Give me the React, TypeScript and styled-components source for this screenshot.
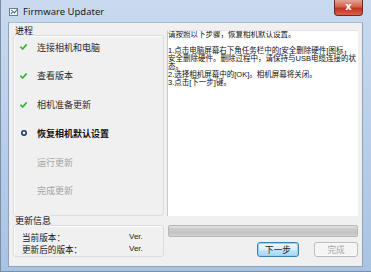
import React from 'react'
import styled, { createGlobalStyle } from 'styled-components'

type StepState = 'done' | 'current' | 'todo'

interface IStep {
  label: string
  state: StepState
}

const steps: IStep[] = [
  { label: '连接相机和电脑', state: 'done' },
  { label: '查看版本', state: 'done' },
  { label: '相机准备更新', state: 'done' },
  { label: '恢复相机默认设置', state: 'current' },
  { label: '运行更新', state: 'todo' },
  { label: '完成更新', state: 'todo' },
]

// the message box keeps its own line breaks, as in the dialog
const messageLines = [
  '1.点击电脑屏幕右下角任务栏中的[安全删除硬件]图标，',
  '安全删除硬件。删除过程中，请保持与USB电缆连接的状',
  '态。',
  '2.选择相机屏幕中的[OK]。相机屏幕将关闭。',
  '3.点击[下一步]键。',
]

const cjk = `"Noto Sans CJK SC", "Noto Sans", sans-serif`

const GlobalStyle = createGlobalStyle`
  html, body {
    margin: 0;
    padding: 0;
    background: #ffffff;
  }
  body {
    font-family: ${cjk};
  }
`

const AppIcon: React.FC = () => (
  <svg width="10" height="10" viewBox="0 0 10 10">
    <rect x="0.5" y="1.5" width="8" height="7" fill="#f4f6f8" stroke="#6d7a88" />
    <path d="M2 7 L4 4.5 L5.5 6 L8 2.5" stroke="#3c6fa8" strokeWidth="1.1" fill="none" />
    <rect x="2" y="3" width="2" height="1" fill="#8a96a3" />
  </svg>
)

const Check: React.FC = () => (
  <svg width="7" height="6" viewBox="0 0 7 6">
    <path d="M0.8 3.2 L2.7 5 L6.3 0.9" stroke="#2fb52f" strokeWidth="1.6" fill="none" strokeLinecap="round" />
  </svg>
)

const CurrentDot: React.FC = () => (
  <svg width="6" height="6" viewBox="0 0 6 6">
    <circle cx="3" cy="3" r="2.2" fill="#ffffff" stroke="#1a2e6e" strokeWidth="1.5" />
  </svg>
)

const App: React.FC = () => {
  return (
    <>
      <GlobalStyle />
      <Window>
        <TitleBar>
          <AppIcon />
          <Title>Firmware Updater</Title>
          <CloseButton>
            <span>x</span>
          </CloseButton>
        </TitleBar>
        <Client>
          <Layout>
            <GroupBox>
              <GroupLabel><span>进程</span></GroupLabel>
              <StepBox>
                {steps.map((s) => (
                  <StepRow key={s.label} $state={s.state}>
                    <StepIcon>
                      {s.state === 'done' && <Check />}
                      {s.state === 'current' && <CurrentDot />}
                    </StepIcon>
                    {s.label}
                  </StepRow>
                ))}
              </StepBox>
            </GroupBox>
            <MessageBox>
              <p>请按照以下步骤，恢复相机默认设置。</p>
              <p>&nbsp;</p>
              {messageLines.map((line) => (
                <p key={line}>{line}</p>
              ))}
            </MessageBox>
            <GroupBox>
              <GroupLabel><span>更新信息</span></GroupLabel>
              <InfoBox>
                <InfoRow>
                  <span>当前版本：</span>
                  <Ver>Ver.</Ver>
                </InfoRow>
                <InfoRow>
                  <span>更新后的版本：</span>
                  <Ver>Ver.</Ver>
                </InfoRow>
              </InfoBox>
            </GroupBox>
            <ActionArea>
              <Progress />
              <Buttons>
                <Button $primary>下一步</Button>
                <Button disabled>完成</Button>
              </Buttons>
            </ActionArea>
          </Layout>
        </Client>
      </Window>
    </>
  )
}

export default App

const Window = styled.div`
  width: 371px;
  height: 272px;
  box-sizing: border-box;
  display: flex;
  flex-direction: column;
  padding: 0 8px 4px 7px;
  background: linear-gradient(180deg, #c9daee 0%, #bcd1ea 40%, #a9c3e3 100%);
  border-left: 1px solid #7b8ea6;
  border-bottom: 1px solid #7b8ea6;
`

const TitleBar = styled.div`
  height: 22px;
  flex-shrink: 0;
  display: flex;
  align-items: center;
  gap: 4px;
  padding: 1px 0 0 1px;
  box-sizing: border-box;
  position: relative;
`

const Title = styled.span`
  font-family: "Noto Sans", "Open Sans", sans-serif;
  font-size: 9.5px;
  color: #1b1b1b;
`

const CloseButton = styled.div`
  position: absolute;
  right: 0;
  top: 0;
  width: 29px;
  height: 16px;
  box-sizing: border-box;
  border: 1px solid #6e2a22;
  border-top: none;
  border-radius: 0 0 4px 4px;
  background: linear-gradient(180deg, #e4a393 0%, #d4604a 45%, #c0321e 55%, #d8634a 100%);
  display: flex;
  align-items: center;
  justify-content: center;
  span {
    font-family: "DejaVu Sans", sans-serif;
    font-weight: 700;
    font-size: 10px;
    line-height: 1;
    color: #ffffff;
    margin-top: -2px;
  }
`

const Client = styled.div`
  flex: 1;
  min-height: 0;
  background: #f0f0f0;
  border: 1px solid #8ea4be;
  border-top-color: #a9bdd4;
  box-sizing: border-box;
  padding: 3px 4px 9px 4px;
`

const Layout = styled.div`
  display: grid;
  grid-template-columns: 151px 191px;
  grid-template-rows: 190px 41px;
  column-gap: 3px;
`

const GroupBox = styled.div`
  display: flex;
  flex-direction: column;
  min-height: 0;
`

const GroupLabel = styled.div`
  font-size: 9px;
  line-height: 10px;
  height: 9px;
  color: #111111;
  padding-left: 2px;
  position: relative;
  z-index: 1;
  span {
    background: #f0f0f0;
  }
`

const StepBox = styled.div`
  flex: 1;
  border: 1px solid #dcdcdc;
  border-radius: 3px;
  box-shadow: inset 1px 1px 0 #ffffff;
`

const StepRow = styled.div<{ $state: StepState }>`
  height: 28.8px;
  box-sizing: border-box;
  padding-top: 5.5px;
  display: flex;
  align-items: flex-start;
  font-size: 9px;
  line-height: 11px;
  font-weight: ${(p) => (p.$state === 'current' ? 700 : 400)};
  color: ${(p) => (p.$state === 'todo' ? '#a3a3a3' : p.$state === 'current' ? '#111111' : '#2a2a2a')};
`

const StepIcon = styled.span`
  width: 23px;
  height: 11px;
  box-sizing: border-box;
  display: flex;
  align-items: center;
  justify-content: flex-end;
  padding-right: 10px;
`

const MessageBox = styled.div`
  background: #ffffff;
  border-left: 1px solid #c8c8c8;
  border-top: 1px solid #e4e4e4;
  margin-top: 4px;
  padding: 0;
  font-family: "Liberation Sans", ${cjk};
  font-size: 7.5px;
  line-height: 8px;
  color: #111111;
  white-space: nowrap;
  overflow: hidden;
  p {
    margin: 0;
  }
`

const InfoBox = styled.div`
  flex: 1;
  border: 1px solid #dcdcdc;
  border-radius: 3px;
  box-shadow: inset 1px 1px 0 #ffffff;
  padding: 5px 0 0 8px;
  display: flex;
  flex-direction: column;
`

const InfoRow = styled.div`
  display: flex;
  font-size: 8.6px;
  line-height: 12px;
  color: #1a1a1a;
  span:first-child {
    width: 107px;
  }
`

const Ver = styled.span`
  font-family: "Liberation Sans", sans-serif;
  font-size: 8px;
`

const ActionArea = styled.div`
  display: flex;
  flex-direction: column;
  padding-top: 9px;
  gap: 5px;
`

const Progress = styled.div`
  height: 12px;
  margin-left: 1px;
  box-sizing: border-box;
  border: 1px solid #b8b8b8;
  border-radius: 2px;
  background: linear-gradient(180deg, #e2e2e2 0%, #cbcbcb 30%, #c4c4c4 70%, #d4d4d4 100%);
`

const Buttons = styled.div`
  display: flex;
  justify-content: flex-end;
  gap: 15px;
`

const Button = styled.button<{ $primary?: boolean }>`
  width: ${(p) => (p.$primary ? '42px' : '44px')};
  height: 15px;
  padding: 0;
  font-family: ${cjk};
  font-size: 8.6px;
  line-height: 1;
  border-radius: 3px;
  border: 1px solid ${(p) => (p.$primary ? '#3c7fb1' : '#b8bcc0')};
  color: #1a1a1a;
  background: ${(p) =>
    p.$primary
      ? 'linear-gradient(180deg, #eaf6fd 0%, #d9f0fc 50%, #bee6fd 51%, #a7d9f5 100%)'
      : '#f4f4f4'};
  box-shadow: ${(p) => (p.$primary ? 'inset 0 0 0 1px #9ad2f2' : 'inset 0 0 0 1px #fbfbfb')};
  &:disabled {
    color: #a6a6a6;
  }
`
